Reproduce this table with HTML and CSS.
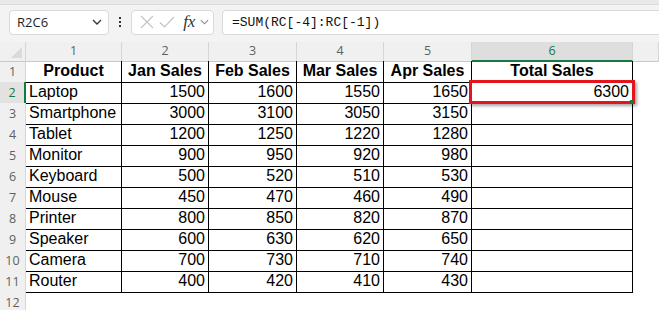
FILE: index.html
```html
<!DOCTYPE html>
<html lang="en">
<head>
    <meta charset="UTF-8">
    <title>Total Sales - R1C1</title>
    <link rel="stylesheet" href="styles.css">
</head>
<body>
    <div class="topstrip"></div>

    <!-- Formula bar -->
    <div class="formula-bar">
        <div class="namebox">
            <span>R2C6</span>
            <svg class="chev" width="10" height="6" viewBox="0 0 10 6"><path d="M1 1 L5 5 L9 1" fill="none" stroke="#333" stroke-width="1.3"/></svg>
        </div>
        <div class="dots"><i></i><i></i><i></i></div>
        <div class="fnbox">
            <svg width="14" height="14" viewBox="0 0 14 14"><path d="M1 1 L13 13 M13 1 L1 13" stroke="#c4c4c4" stroke-width="1.2"/></svg>
            <svg width="16" height="14" viewBox="0 0 16 14"><path d="M1 7.5 L5.5 12 L15 2" fill="none" stroke="#c4c4c4" stroke-width="1.2"/></svg>
            <span class="fx">fx</span>
            <svg class="chev" width="9" height="6" viewBox="0 0 10 6"><path d="M1 1 L5 5 L9 1" fill="none" stroke="#888" stroke-width="1.2"/></svg>
        </div>
        <div class="formula">=SUM(RC[-4]:RC[-1])</div>
    </div>

    <!-- Sheet -->
    <div class="sheet">
        <div class="row head">
            <div class="corner"><span class="tri"></span></div>
            <div class="ch">1</div>
            <div class="ch">2</div>
            <div class="ch">3</div>
            <div class="ch">4</div>
            <div class="ch">5</div>
            <div class="ch sel">6</div>
            <div class="ch"></div>
        </div>
        <div class="row">
            <div class="rh">1</div>
            <div class="c b ctr">Product</div>
            <div class="c b ctr">Jan Sales</div>
            <div class="c b ctr">Feb Sales</div>
            <div class="c b ctr">Mar Sales</div>
            <div class="c b ctr">Apr Sales</div>
            <div class="c b ctr">Total Sales</div>
            <div class="e"></div>
        </div>
        <div class="row">
            <div class="rh sel">2</div>
            <div class="c">Laptop</div>
            <div class="c n">1500</div>
            <div class="c n">1600</div>
            <div class="c n">1550</div>
            <div class="c n">1650</div>
            <div class="c n active">6300<span class="mark"></span><span class="handle"></span></div>
            <div class="e"></div>
        </div>
        <div class="row">
            <div class="rh">3</div>
            <div class="c">Smartphone</div>
            <div class="c n">3000</div>
            <div class="c n">3100</div>
            <div class="c n">3050</div>
            <div class="c n">3150</div>
            <div class="c n"></div>
            <div class="e"></div>
        </div>
        <div class="row">
            <div class="rh">4</div>
            <div class="c">Tablet</div>
            <div class="c n">1200</div>
            <div class="c n">1250</div>
            <div class="c n">1220</div>
            <div class="c n">1280</div>
            <div class="c n"></div>
            <div class="e"></div>
        </div>
        <div class="row">
            <div class="rh">5</div>
            <div class="c">Monitor</div>
            <div class="c n">900</div>
            <div class="c n">950</div>
            <div class="c n">920</div>
            <div class="c n">980</div>
            <div class="c n"></div>
            <div class="e"></div>
        </div>
        <div class="row">
            <div class="rh">6</div>
            <div class="c">Keyboard</div>
            <div class="c n">500</div>
            <div class="c n">520</div>
            <div class="c n">510</div>
            <div class="c n">530</div>
            <div class="c n"></div>
            <div class="e"></div>
        </div>
        <div class="row">
            <div class="rh">7</div>
            <div class="c">Mouse</div>
            <div class="c n">450</div>
            <div class="c n">470</div>
            <div class="c n">460</div>
            <div class="c n">490</div>
            <div class="c n"></div>
            <div class="e"></div>
        </div>
        <div class="row">
            <div class="rh">8</div>
            <div class="c">Printer</div>
            <div class="c n">800</div>
            <div class="c n">850</div>
            <div class="c n">820</div>
            <div class="c n">870</div>
            <div class="c n"></div>
            <div class="e"></div>
        </div>
        <div class="row">
            <div class="rh">9</div>
            <div class="c">Speaker</div>
            <div class="c n">600</div>
            <div class="c n">630</div>
            <div class="c n">620</div>
            <div class="c n">650</div>
            <div class="c n"></div>
            <div class="e"></div>
        </div>
        <div class="row">
            <div class="rh">10</div>
            <div class="c">Camera</div>
            <div class="c n">700</div>
            <div class="c n">730</div>
            <div class="c n">710</div>
            <div class="c n">740</div>
            <div class="c n"></div>
            <div class="e"></div>
        </div>
        <div class="row last">
            <div class="rh">11</div>
            <div class="c">Router</div>
            <div class="c n">400</div>
            <div class="c n">420</div>
            <div class="c n">410</div>
            <div class="c n">430</div>
            <div class="c n"></div>
            <div class="e"></div>
        </div>
        <div class="row">
            <div class="rh">12</div>
        </div>
    </div>
</body>
</html>
```

FILE: styles.css
```css
* {
    box-sizing: border-box;
}
html, body {
    margin: 0;
    background: #ffffff;
}
body {
    width: 659px;
    font-family: "Liberation Sans", Arial, sans-serif;
}

/* top ribbon edge */
.topstrip {
    height: 5px;
    background: #e9e9e9;
    border-bottom: 1px solid #dcdcdc;
}

/* formula bar */
.formula-bar {
    display: flex;
    align-items: center;
    height: 37px;
    padding: 0 0 3px 9px;
    background: #f3f3f3;
    font-family: "Open Sans", "Noto Sans", sans-serif;
}
.namebox, .fnbox, .formula {
    height: 25px;
    background: #ffffff;
    border: 1px solid #dadada;
    border-radius: 4px;
    display: flex;
    align-items: center;
}
.namebox {
    width: 100px;
    padding: 0 6px 0 7px;
    justify-content: space-between;
    font-size: 13px;
    color: #1f1f1f;
}
.dots {
    width: 22px;
    display: flex;
    flex-direction: column;
    align-items: center;
    gap: 2px;
}
.dots i {
    width: 2px;
    height: 2px;
    background: #333;
}
.fnbox {
    width: 83px;
    padding: 0 4px 0 8px;
    justify-content: space-between;
}
.fx {
    font-family: "Liberation Serif", serif;
    font-style: italic;
    font-size: 17px;
    color: #333;
    margin-left: 4px;
}
.formula {
    flex: 1;
    margin-left: 8px;
    border-right: none;
    border-radius: 4px 0 0 4px;
    padding-left: 9px;
    font-family: "Liberation Mono", "DejaVu Sans Mono", monospace;
    font-size: 13px;
    color: #111;
}

/* sheet grid */
.row {
    display: grid;
    grid-template-columns: 26px 96px 87px 88px 87px 88px 161px 1fr;
    height: 21px;
}
.row.head {
    height: 19px;
}
.corner, .ch {
    background: #f0f0f0;
    border-right: 1px solid #d6d6d6;
    border-bottom: 1px solid #c9c9c9;
    font-family: "Open Sans", "Noto Sans", sans-serif;
    font-size: 12.5px;
    color: #5f5f5f;
    text-align: center;
    line-height: 18px;
}
.corner {
    position: relative;
}
.tri {
    position: absolute;
    right: 3px;
    bottom: 3px;
    width: 0;
    height: 0;
    border-left: 11px solid transparent;
    border-bottom: 11px solid #dadada;
}
.ch.sel {
    background: #dedede;
    color: #107c41;
    border-bottom: 2px solid #107c41;
}
.rh {
    background: #f0f0f0;
    border-right: 1px solid #d6d6d6;
    border-bottom: 1px solid #dedede;
    font-family: "Open Sans", "Noto Sans", sans-serif;
    font-size: 12.5px;
    color: #5f5f5f;
    text-align: center;
    line-height: 21px;
}
.rh.sel {
    background: #e2e2e2;
    color: #107c41;
    border-right: 2px solid #107c41;
}

.c {
    border-right: 1px solid #000;
    border-bottom: 1px solid #000;
    padding: 0 3px;
    font-size: 16px;
    line-height: 20px;
    color: #000;
    white-space: nowrap;
}
.b {
    font-weight: bold;
}
.ctr {
    text-align: center;
}
.n {
    text-align: right;
}

/* selected cell highlight */
.active {
    position: relative;
}
.mark {
    position: absolute;
    left: -3px;
    top: -2px;
    width: 166px;
    height: 24px;
    border: 3px solid #e3141b;
    box-shadow: 2px 2px 3px rgba(0, 0, 0, 0.35);
}
.handle {
    position: absolute;
    right: -1px;
    bottom: -1px;
    width: 3px;
    height: 4px;
    background: #107c41;
}
```
